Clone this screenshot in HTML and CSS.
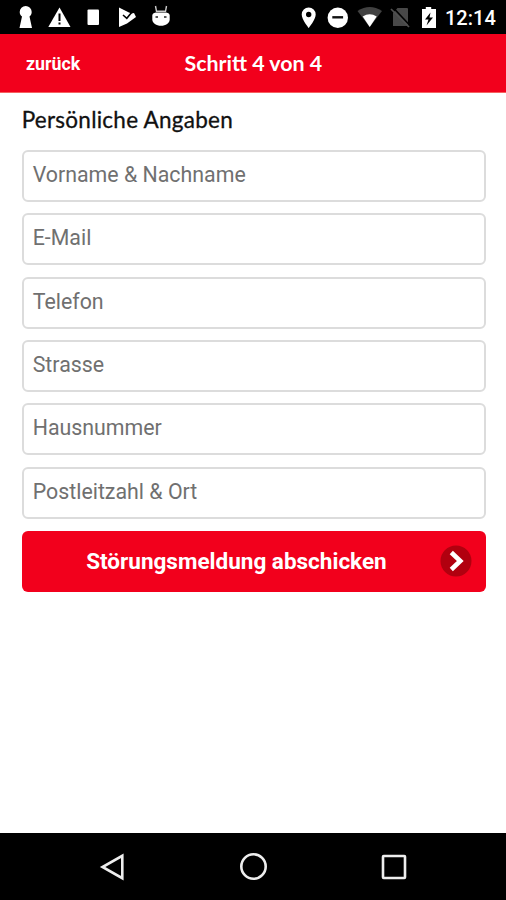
FILE: index.html
```html
<!DOCTYPE html>
<html lang="de">
<head>
<meta charset="utf-8">
<title>Persönliche Angaben</title>
<link rel="stylesheet" href="styles.css">
</head>
<body>
<div class="screen">
  <div class="status">
    <div class="status-group">
      <svg width="34" height="34" viewBox="9 0 34 34"><path fill="#fff" d="M25.700 6a6 6 0 0 1 6 6c0 2.200-1 3.300-2.200 4.600L32 28H19.500L22 16.600c-1.300-1.300-2.300-2.400-2.300-4.600a6 6 0 0 1 6-6z"/></svg>
      <svg width="34" height="34" viewBox="43 0 34 34"><path fill="#fff" d="M59.500 7.500 70.500 27h-22.200z"/><path stroke="#000" stroke-width="2" d="M59.500 13.500v7.500M59.500 22.500v2"/></svg>
      <svg width="34" height="34" viewBox="77 0 34 34"><rect x="87.500" y="9.500" width="11.500" height="15.500" rx="1" fill="#fff"/></svg>
      <svg width="32" height="34" viewBox="111 0 32 34"><path fill="#fff" d="M119 7.500 129 12.500l2.500 1 2.500-.5 2 4-9 6.500L119 27z"/><path stroke="#000" stroke-width="1.600" fill="none" d="m123 15 3.800 3.300 6-7.300"/></svg>
      <svg width="36" height="34" viewBox="143 0 36 34"><path fill="#fff" d="M152.300 15.500q0-2.500 3.500-3h10.400q3.500.5 3.500 3v4c0 3.500-4 6.300-8.700 6.300s-8.700-2.800-8.700-6.300z"/><path stroke="#ccc" stroke-width="1.400" fill="none" d="m155.500 6 1 5.300h9l1-5.300"/><path stroke="#222" stroke-width="1.400" d="M155.500 17h2.500M164 17h2.500"/></svg>
    </div>
    <div class="status-group">
      <svg width="28" height="34" viewBox="295 0 28 34"><path fill="#fff" fill-rule="evenodd" d="M308.700 7.500a7 7 0 0 1 7 7c0 5-7 13.500-7 13.500s-7-8.500-7-13.500a7 7 0 0 1 7-7zm0 4.300a2.700 2.700 0 1 0 0 5.400 2.700 2.700 0 0 0 0-5.400z"/></svg>
      <svg width="32" height="34" viewBox="323 0 32 34"><circle cx="337.800" cy="17.800" r="10.200" fill="#fff"/><path stroke="#111" stroke-width="2.400" d="M332.300 17.300h10.800"/></svg>
      <svg width="32" height="34" viewBox="355 0 32 34"><path fill="#414141" d="M357.500 11q12.200-8 24.500 0L369.700 27z"/><path fill="#fff" d="M362.700 16.500q7-4.500 14 0l-7 10.500z"/></svg>
      <svg width="30" height="34" viewBox="387 0 30 34"><path fill="#484848" d="M397.500 8h9.500q1 0 1 1v17h-15V13z"/><path stroke="#000" stroke-width="1.600" d="m393 7.500 17 18"/><path stroke="#505050" stroke-width="1.700" d="m391 9 18 18"/></svg>
      <svg width="26" height="34" viewBox="417 0 26 34"><path fill="#fff" d="M422 9h3.800V7h5.400v2h4.800v19h-14z"/><path fill="#000" d="M430.500 12.500 425 19.500h3.500l-2 6 6.500-8h-3.500z"/></svg>
      <span class="clock">12:14</span>
    </div>
  </div>
  <header class="header">
    <span class="back">zurück</span>
    <span class="title">Schritt 4 von 4</span>
  </header>
  <main class="content">
    <h1 class="heading">Persönliche Angaben</h1>
    <div class="form">
      <div class="field"><span>Vorname &amp; Nachname</span></div>
      <div class="field"><span>E-Mail</span></div>
      <div class="field"><span>Telefon</span></div>
      <div class="field"><span>Strasse</span></div>
      <div class="field"><span>Hausnummer</span></div>
      <div class="field"><span>Postleitzahl &amp; Ort</span></div>
      <div class="submit">
        <span>Störungsmeldung abschicken</span>
        <svg width="32" height="32" viewBox="0 0 32 32"><circle cx="16" cy="16" r="15.500" fill="#b1000f"/><path d="m11.300 7.500 9 8.500-9 8.500" fill="none" stroke="#fff" stroke-width="4.600"/></svg>
      </div>
    </div>
  </main>
  <nav class="nav">
    <svg width="34" height="34" viewBox="0 0 34 34"><path d="M26.300 5.800v22.400L6.500 17z"/></svg>
    <svg width="34" height="34" viewBox="0 0 34 34"><circle cx="16.500" cy="16.500" r="12.200"/></svg>
    <svg width="34" height="34" viewBox="0 0 34 34"><rect x="6" y="6" width="22" height="22" rx=".7"/></svg>
  </nav>
</div>
</body>
</html>
```
FILE: styles.css
```css
* { box-sizing: border-box; }
body { margin: 0; background: #fff; font-family: Roboto, "Liberation Sans", sans-serif; }
svg { display: block; flex: none; }
span { white-space: nowrap; }

.screen { display: flex; flex-direction: column; width: 506px; height: 900px; }

.status {
  display: flex;
  justify-content: space-between;
  height: 34px;
  padding: 0 11px 0 9px;
  background: #000;
}
.status-group { display: flex; align-items: center; }
.clock {
  width: 52px;
  margin-top: 2px;
  padding-left: 2px;
  color: #fff;
  font-size: 20px;
  font-weight: 500;
  line-height: 24px;
}

.header {
  display: grid;
  grid-template-columns: 158.500px 1fr;
  align-items: center;
  height: 59px;
  padding-left: 26px;
  background: #f2001c;
  border-bottom: 1px solid #f5605f;
  color: #fff;
}
.back { font-size: 17.800px; font-weight: 700; }
.title { font-family: Lato, sans-serif; font-size: 21.400px; font-weight: 700; }

.content { flex: 1; padding: 13px 20.500px 0 21.700px; }
.heading {
  margin: 0;
  font-family: Lato, sans-serif;
  font-size: 22.500px;
  font-weight: 400;
  letter-spacing: .25px;
  line-height: 28px;
  color: #111;
  -webkit-text-stroke: .3px #111;
}
.form { display: flex; flex-direction: column; gap: 11.400px; margin-top: 15.800px; }
.field {
  display: flex;
  align-items: center;
  height: 52px;
  padding: 0 9px 3px;
  border: 2px solid #dcdcdc;
  border-radius: 6px;
  color: #707070;
  font-size: 21.350px;
}
.submit {
  display: flex;
  align-items: center;
  justify-content: space-between;
  height: 61px;
  margin-top: .5px;
  padding: 0 13.500px 0 64.500px;
  border-radius: 6px;
  background: #f2001c;
  color: #fff;
  font-size: 22.500px;
  font-weight: 700;
}

.nav {
  display: flex;
  justify-content: center;
  gap: 106.500px;
  height: 67px;
  padding: 17px 0 0 1.500px;
  background: #000;
}
.nav svg { fill: none; stroke: #eee; stroke-width: 2.600; }
```
